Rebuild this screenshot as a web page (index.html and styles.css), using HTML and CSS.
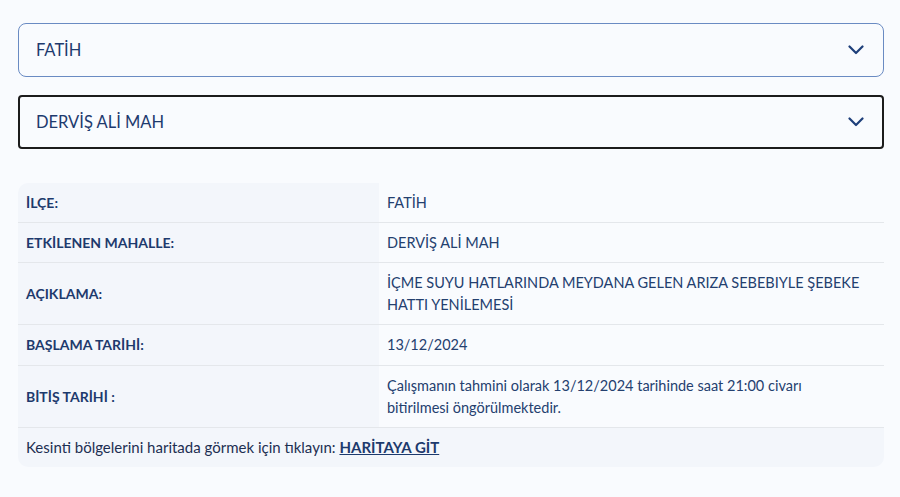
FILE: index.html
```html
<!DOCTYPE html>
<html lang="tr">
<head>
    <meta charset="UTF-8">
    <meta name="viewport" content="width=device-width, initial-scale=1.0">
    <title>Kesinti Bilgisi</title>
    <link rel="stylesheet" href="styles.css">
</head>
<body>
    <div class="container">
        <div class="select select-district">
            <span>FATİH</span>
            <svg class="chevron" width="16" height="10" viewBox="0 0 16 10"><path d="M1.5 1.5 L8 8 L14.5 1.5" fill="none" stroke="#1e3f7a" stroke-width="2.2" stroke-linecap="round" stroke-linejoin="round"/></svg>
        </div>
        <div class="select select-active">
            <span>DERVİŞ ALİ MAH</span>
            <svg class="chevron" width="16" height="10" viewBox="0 0 16 10"><path d="M1.5 1.5 L8 8 L14.5 1.5" fill="none" stroke="#1e3f7a" stroke-width="2.2" stroke-linecap="round" stroke-linejoin="round"/></svg>
        </div>

        <table class="info-table">
            <tr>
                <th>İLÇE:</th>
                <td>FATİH</td>
            </tr>
            <tr>
                <th>ETKİLENEN MAHALLE:</th>
                <td>DERVİŞ ALİ MAH</td>
            </tr>
            <tr>
                <th>AÇIKLAMA:</th>
                <td>İÇME SUYU HATLARINDA MEYDANA GELEN ARIZA SEBEBIYLE ŞEBEKE HATTI YENİLEMESİ</td>
            </tr>
            <tr class="row-tall">
                <th>BAŞLAMA TARİHİ:</th>
                <td>13/12/2024</td>
            </tr>
            <tr>
                <th>BİTİŞ TARİHİ :</th>
                <td>Çalışmanın tahmini olarak 13/12/2024 tarihinde saat 21:00 civarı bitirilmesi öngörülmektedir.</td>
            </tr>
            <tr class="map-row">
                <td colspan="2">Kesinti bölgelerini haritada görmek için tıklayın: <a href="#">HARİTAYA GİT</a></td>
            </tr>
        </table>
    </div>
</body>
</html>
```

FILE: styles.css
```css
body {
    margin: 0;
    padding: 0;
    background: #f9fbfe;
    font-family: "Lato", "Open Sans", sans-serif;
    color: #1e3a6e;
}
.container {
    padding: 23px 16px 30px 18px;
}
.select {
    display: flex;
    align-items: center;
    justify-content: space-between;
    box-sizing: border-box;
    height: 54px;
    padding: 0 19px 0 17px;
    font-size: 16.5px;
    background: #f9fbfe;
}
.select-district {
    border: 1px solid #6a8bc3;
    border-radius: 8px;
}
.select-active {
    margin-top: 18px;
    border: 2px solid #1c1c1c;
    border-radius: 4px;
    padding-left: 16px;
    padding-right: 18px;
}
.chevron {
    display: block;
}
.info-table {
    width: 100%;
    margin-top: 34px;
    border-collapse: separate;
    border-spacing: 0;
    font-size: 14.5px;
    line-height: 22px;
}
.info-table th,
.info-table td {
    padding: 9px 22px 8px 8px;
    text-align: left;
    vertical-align: middle;
    border-bottom: 1px solid #e4e7eb;
}
.info-table th {
    width: 331px;
    background: #f3f6fb;
    font-size: 14px;
    font-weight: 700;
    color: #1d3a6d;
}
.info-table td {
    font-weight: 400;
    color: #24406f;
}
.info-table tr:first-child th {
    border-top-left-radius: 10px;
}
.row-tall th,
.row-tall td {
    padding-bottom: 9px;
}
.map-row td {
    background: #f3f6fb;
    border-bottom: none;
    padding-top: 8px;
    padding-bottom: 9px;
    font-size: 15px;
    color: #1d2f52;
    border-radius: 0 0 10px 10px;
}
.map-row a {
    color: #1d3a6d;
    font-weight: 700;
    text-decoration: underline;
}
```
